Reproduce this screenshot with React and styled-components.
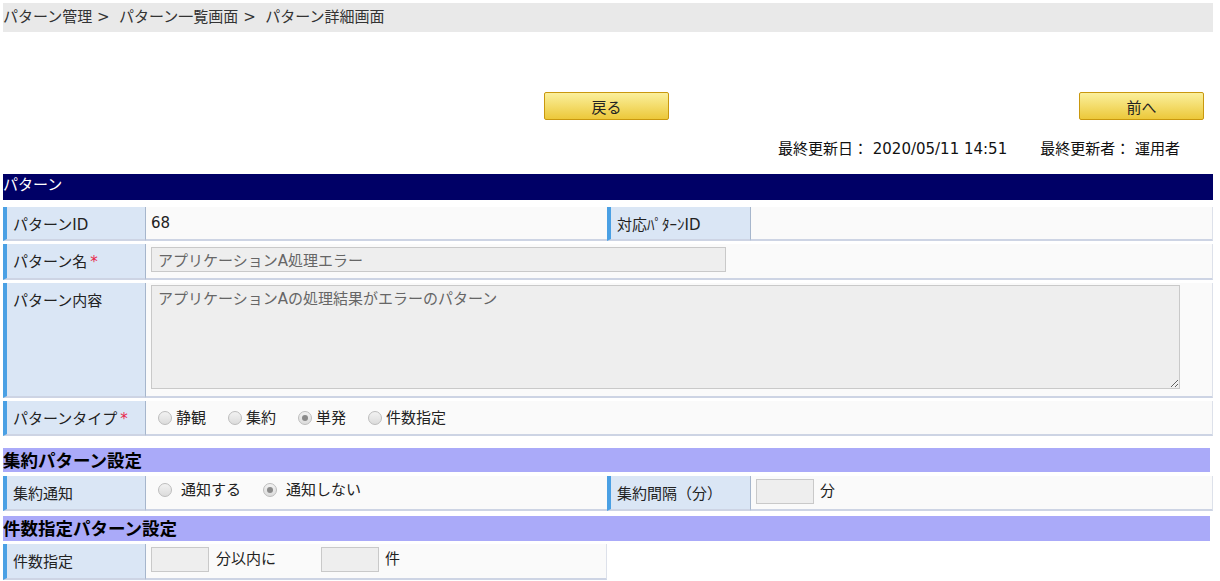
import React from "react";
import styled, { createGlobalStyle } from "styled-components";

const Global = createGlobalStyle`
  html, body { margin: 0; padding: 0; background: #fff; }
  body {
    font-family: "DejaVu Sans", "Noto Sans CJK JP", sans-serif;
    font-size: 15px;
    color: #222;
  }
  * { box-sizing: border-box; }
`;

const Page = styled.div`
  padding: 3px 7px 0 3px;
  width: 1220px;
`;

const Breadcrumb = styled.div`
  background: #e9e9e9;
  height: 29px;
  line-height: 28px;
  font-size: 15px;
  color: #333;
  white-space: pre;
`;

const ButtonBar = styled.div`
  display: grid;
  grid-template-columns: 541px 125px 1fr;
  align-items: center;
  margin-top: 60px;
`;

const Right = styled.div`
  display: flex;
  justify-content: flex-end;
  padding-right: 9px;
`;

const YButton = styled.button`
  width: 125px;
  height: 28px;
  border: 1px solid #c9980e;
  border-radius: 2px;
  background: linear-gradient(#fbf09c, #ecc83a);
  font-family: inherit;
  font-size: 15px;
  color: #222;
  padding: 0;
  cursor: pointer;
`;

const UpdateInfo = styled.div`
  display: flex;
  justify-content: flex-end;
  gap: 33px;
  margin-top: 19px;
  padding-right: 33px;
  height: 20px;
  line-height: 20px;
  font-size: 15px;
  color: #111;
  white-space: pre;
`;

const NavyHeader = styled.div`
  margin-top: 15px;
  background: #000066;
  color: #fff;
  height: 26px;
  line-height: 22px;
  font-size: 15px;
`;

const Table = styled.div`
  display: flex;
  flex-direction: column;
  gap: 3px;
  margin-top: ${(p) => p.$mt || 0}px;
`;

const Row = styled.div`
  display: grid;
  grid-template-columns: ${(p) => p.$cols || "143px 1fr"};
  width: ${(p) => p.$w || "1210px"};
  min-height: ${(p) => p.$h || 34}px;
`;

const Label = styled.div`
  background: #dae6f5;
  border-left: 4px solid #4aa0e4;
  border-right: 1px solid #a6b6cc;
  border-bottom: 2px solid #cdd4e4;
  padding: 8px 0 0 6px;
  line-height: 20px;
  font-size: 15px;
  color: #222;
  white-space: pre;
`;

const Req = styled.span`
  color: #e8264a;
  margin-left: 3px;
`;

const Value = styled.div`
  background: #fafafa;
  border-bottom: 2px solid #cdd4e4;
  border-right: ${(p) => (p.$edge ? "1px solid #dde1ea" : "none")};
  padding: ${(p) => p.$pad || "3px 5px"};
  display: flex;
  align-items: ${(p) => p.$align || "center"};
  font-size: 15px;
  line-height: 20px;
  color: #222;
`;

const TextInput = styled.input`
  width: ${(p) => p.$w}px;
  height: 25px;
  background: #eeeeee;
  border: 1px solid #c9c9c9;
  font-family: inherit;
  font-size: 15px;
  color: #666;
  padding: 0 6px;
  margin: 0;
`;

const TextArea = styled.textarea`
  width: 1029px;
  height: 104px;
  background: #eeeeee;
  border: 1px solid #c9c9c9;
  font-family: inherit;
  font-size: 15px;
  line-height: 20px;
  color: #666;
  padding: 3px 6px;
  margin: 0;
  resize: both;
`;

const RadioGroup = styled.div`
  display: flex;
  align-items: center;
  gap: ${(p) => p.$gap || 22}px;
  padding-left: 7px;
`;

const RadioLabel = styled.label`
  display: flex;
  align-items: center;
  gap: ${(p) => p.$gap || 5}px;
  color: #222;
  font-size: 15px;
`;

const Radio = styled.input.attrs({ type: "radio", disabled: true })`
  appearance: none;
  -webkit-appearance: none;
  margin: 0;
  width: 14px;
  height: 14px;
  border-radius: 50%;
  border: 1px solid #bdbdbd;
  background: linear-gradient(#f2f2f2, #dcdcdc);
  position: relative;
  &:checked::after {
    content: "";
    position: absolute;
    left: 3px;
    top: 3px;
    width: 6px;
    height: 6px;
    border-radius: 50%;
    background: #8a8a8a;
  }
`;

const Unit = styled.span`
  margin-left: ${(p) => p.$ml || 6}px;
  margin-right: ${(p) => p.$mr || 0}px;
  line-height: 25px;
`;

const SectionHeader = styled.div`
  width: 1207px;
  background: #aaaaf9;
  height: ${(p) => p.$h || 24}px;
  line-height: 27px;
  font-size: 17.5px;
  font-weight: bold;
  color: #000;
  margin-top: ${(p) => p.$mt || 0}px;
  margin-bottom: ${(p) => p.$mb || 0}px;
  white-space: nowrap;
  overflow: hidden;
`;

export default function App() {
  return (
    <>
      <Global />
      <Page>
        <Breadcrumb>パターン管理 &gt;  パターン一覧画面 &gt;  パターン詳細画面</Breadcrumb>
        <ButtonBar>
          <div />
          <YButton>戻る</YButton>
          <Right>
            <YButton>前へ</YButton>
          </Right>
        </ButtonBar>
        <UpdateInfo>
          <span>最終更新日： 2020/05/11 14:51</span>
          <span>最終更新者： 運用者</span>
        </UpdateInfo>
        <NavyHeader>パターン</NavyHeader>
        <Table $mt={7}>
          <Row $cols="143px 461px 144px 1fr">
            <Label>パターンID</Label>
            <Value $pad="0 5px 1px">68</Value>
            <Label>対応ﾊﾟﾀｰﾝID</Label>
            <Value $edge />
          </Row>
          <Row $h={36}>
            <Label>
              パターン名<Req>*</Req>
            </Label>
            <Value $edge $align="flex-start">
              <TextInput $w={575} readOnly value="アプリケーションA処理エラー" />
            </Value>
          </Row>
          <Row $h={115}>
            <Label>パターン内容</Label>
            <Value $edge $align="flex-start" $pad="2px 5px">
              <TextArea readOnly value="アプリケーションAの処理結果がエラーのパターン" />
            </Value>
          </Row>
          <Row $h={35}>
            <Label>
              パターンタイプ<Req>*</Req>
            </Label>
            <Value $edge>
              <RadioGroup $gap={22}>
                <RadioLabel $gap={4}>
                  <Radio name="t" />
                  静観
                </RadioLabel>
                <RadioLabel $gap={4}>
                  <Radio name="t" />
                  集約
                </RadioLabel>
                <RadioLabel $gap={4}>
                  <Radio name="t" defaultChecked />
                  単発
                </RadioLabel>
                <RadioLabel $gap={4}>
                  <Radio name="t" />
                  件数指定
                </RadioLabel>
              </RadioGroup>
            </Value>
          </Row>
        </Table>
        <SectionHeader $mt={12} $mb={4}>集約パターン設定</SectionHeader>
        <Row $cols="143px 461px 144px 1fr" $h={35}>
          <Label>集約通知</Label>
          <Value $pad="0 5px 5px">
            <RadioGroup $gap={22}>
              <RadioLabel $gap={9}>
                <Radio name="n" />
                通知する
              </RadioLabel>
              <RadioLabel $gap={9}>
                <Radio name="n" defaultChecked />
                通知しない
              </RadioLabel>
            </RadioGroup>
          </Value>
          <Label>集約間隔（分）</Label>
          <Value $edge $pad="3px 5px" $align="flex-start">
            <TextInput $w={58} readOnly value="" />
            <Unit>分</Unit>
          </Value>
        </Row>
        <SectionHeader $mt={5} $h={25} $mb={3}>件数指定パターン設定</SectionHeader>
        <Row $w="604px" $h={36}>
          <Label>件数指定</Label>
          <Value $edge $pad="3px 5px" $align="flex-start">
            <TextInput $w={58} readOnly value="" />
            <Unit $ml={7} $mr={45}>分以内に</Unit>
            <TextInput $w={58} readOnly value="" />
            <Unit>件</Unit>
          </Value>
        </Row>
      </Page>
    </>
  );
}
